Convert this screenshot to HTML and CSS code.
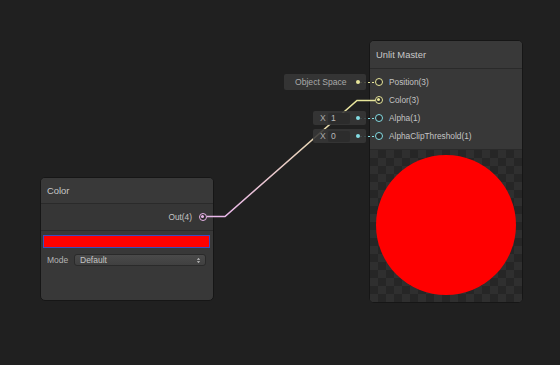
FILE: index.html
```html
<!DOCTYPE html>
<html>
<head>
<meta charset="utf-8">
<link rel="stylesheet" href="styles.css">
</head>
<body>
<div class="canvas">
  <svg class="wires" width="560" height="365" viewBox="0 0 560 365">
    <defs>
      <linearGradient id="wg" gradientUnits="userSpaceOnUse" x1="225" y1="216" x2="357" y2="100">
        <stop offset="0" stop-color="#eab8ea"/>
        <stop offset="1" stop-color="#e8e69a"/>
      </linearGradient>
    </defs>
    <polyline points="207,216.5 225,216.5 357,100.5 375,100.5" fill="none" stroke="url(#wg)" stroke-width="1.6"/>
    <line x1="360" y1="82.5" x2="375" y2="82.5" stroke="#e6e69a" stroke-width="1.2" stroke-dasharray="2 2"/>
    <line x1="360" y1="118.5" x2="375" y2="118.5" stroke="#84dde4" stroke-width="1.2" stroke-dasharray="2 2"/>
    <line x1="360" y1="136.5" x2="375" y2="136.5" stroke="#84dde4" stroke-width="1.2" stroke-dasharray="2 2"/>
  </svg>

  <div class="inbox space">
    <span class="intext">Object Space</span>
    <span class="dot yellow"></span>
  </div>
  <div class="inbox xval x1">
    <span class="xlab">X</span><span class="xfield">1</span>
    <span class="dot cyan"></span>
  </div>
  <div class="inbox xval x0">
    <span class="xlab">X</span><span class="xfield">0</span>
    <span class="dot cyan"></span>
  </div>

  <div class="node color-node">
    <div class="header">Color</div>
    <div class="outrow">
      <span class="plabel">Out(4)</span>
      <span class="port pink filled"></span>
    </div>
    <div class="props">
      <div class="swatch"></div>
      <div class="moderow">
        <span class="mlabel">Mode</span>
        <div class="dropdown">
          <span>Default</span>
          <svg width="5" height="7" viewBox="0 0 5 7"><path d="M0.8 2.8 L2.5 1 L4.2 2.8 Z M0.8 4.2 L2.5 6 L4.2 4.2 Z" fill="#c8c8c8"/></svg>
        </div>
      </div>
    </div>
  </div>

  <div class="node master">
    <div class="header">Unlit Master</div>
    <div class="ports">
      <div class="prow"><span class="port yellow"></span><span class="plabel">Position(3)</span></div>
      <div class="prow"><span class="port yellow filled"></span><span class="plabel">Color(3)</span></div>
      <div class="prow"><span class="port cyan"></span><span class="plabel">Alpha(1)</span></div>
      <div class="prow"><span class="port cyan"></span><span class="plabel">AlphaClipThreshold(1)</span></div>
    </div>
    <div class="preview">
      <div class="circle"></div>
    </div>
  </div>
</div>
</body>
</html>
```

FILE: styles.css
```css
html, body {
  margin: 0;
  padding: 0;
  background: #202020;
}
body {
  width: 560px;
  height: 365px;
  overflow: hidden;
  font-family: "Liberation Sans", Arial, sans-serif;
  color: #c4c4c4;
}
.canvas {
  position: relative;
  width: 560px;
  height: 365px;
}
.wires {
  position: absolute;
  left: 0;
  top: 0;
  z-index: 1;
}
.inbox {
  position: absolute;
  z-index: 2;
  display: flex;
  align-items: center;
  box-sizing: border-box;
  background: rgba(55, 55, 55, 0.88);
  border-radius: 2px;
  font-size: 8.6px;
  color: #a9a9a9;
}
.space {
  left: 284px;
  top: 74px;
  width: 82px;
  height: 16px;
}
.intext {
  margin-left: 11px;
}
.xval {
  left: 313px;
  width: 53px;
  height: 14px;
}
.x1 { top: 111px; }
.x0 { top: 129px; }
.xlab {
  margin-left: 7px;
  width: 8px;
  color: #a9a9a9;
}
.xfield {
  width: 22px;
  height: 11px;
  line-height: 11px;
  padding-left: 3px;
  box-sizing: border-box;
  background: #2c2c2c;
  border-radius: 2px;
  color: #b8b8b8;
}
.dot {
  position: absolute;
  right: 6px;
  top: 50%;
  width: 4px;
  height: 4px;
  margin-top: -2px;
  border-radius: 50%;
}
.dot.yellow { background: #e8e69a; }
.dot.cyan { background: #84dde4; }

.node {
  position: absolute;
  box-sizing: border-box;
  background: #383838;
  border: 1px solid #161616;
  border-radius: 5px;
  overflow: hidden;
  display: flex;
  flex-direction: column;
  z-index: 0;
}
.header {
  flex: none;
  background: #393939;
  border-bottom: 1px solid #2a2a2a;
  font-size: 9.4px;
  color: #c8c8c8;
  display: flex;
  align-items: center;
}
.plabel {
  font-size: 8.3px;
  color: #c4c4c4;
}
.port {
  display: inline-block;
  box-sizing: border-box;
  width: 8px;
  height: 8px;
  border-radius: 50%;
  border: 1.5px solid;
  background: #2a2a2a;
  position: relative;
  flex: none;
}
.port.yellow { border-color: #e8e69a; }
.port.cyan { border-color: #84dde4; }
.port.pink { border-color: #e8b4e8; }
.port.filled::after {
  content: "";
  position: absolute;
  left: 1px;
  top: 1px;
  width: 3px;
  height: 3px;
  border-radius: 50%;
}
.port.yellow.filled::after { background: #e8e69a; }
.port.pink.filled::after { background: #e8b4e8; }

/* Color node */
.color-node {
  left: 40px;
  top: 177px;
  width: 174px;
  height: 124px;
}
.color-node .header {
  height: 25px;
  padding-left: 6px;
}
.outrow {
  height: 26px;
  flex: none;
  display: flex;
  align-items: center;
  justify-content: flex-end;
  padding-right: 6px;
  gap: 7px;
  border-bottom: 1px solid #2a2a2a;
  background: #363636;
}
.props {
  flex: 1;
  padding: 4px 3px 0 2px;
  display: flex;
  flex-direction: column;
  gap: 6px;
}
.swatch {
  height: 13px;
  box-sizing: border-box;
  background: #ff0000;
  border: 1px solid #3a4cc0;
}
.moderow {
  display: flex;
  align-items: center;
  height: 12px;
}
.mlabel {
  box-sizing: border-box;
  flex: none;
  font-size: 8.5px;
  color: #b4b4b4;
  width: 31px;
  padding-left: 4px;
}
.dropdown {
  flex: 1;
  margin-right: 4px;
  height: 12px;
  box-sizing: border-box;
  border-radius: 3px;
  background: linear-gradient(#4a4a4a, #404040);
  border: 1px solid #2a2a2a;
  display: flex;
  align-items: center;
  justify-content: space-between;
  padding: 0 4px 0 5px;
  font-size: 8.5px;
  color: #c4c4c4;
}

/* Master node */
.master {
  left: 369px;
  top: 40px;
  width: 154px;
  height: 263px;
}
.master .header {
  height: 27px;
  padding-left: 6px;
}
.ports {
  flex: none;
  padding: 4px 0 4px 5px;
  display: flex;
  flex-direction: column;
}
.prow {
  height: 18px;
  display: flex;
  align-items: center;
  gap: 6px;
}
.preview {
  flex: 1;
  position: relative;
  background-color: #2f2f2f;
  background-image: conic-gradient(#262626 25%, #2f2f2f 0 50%, #262626 0 75%, #2f2f2f 0);
  background-size: 16px 16px;
  border-top: 1px solid #2a2a2a;
}
.circle {
  position: absolute;
  left: 6px;
  top: 5px;
  width: 140px;
  height: 140px;
  border-radius: 50%;
  background: #ff0000;
}
```
